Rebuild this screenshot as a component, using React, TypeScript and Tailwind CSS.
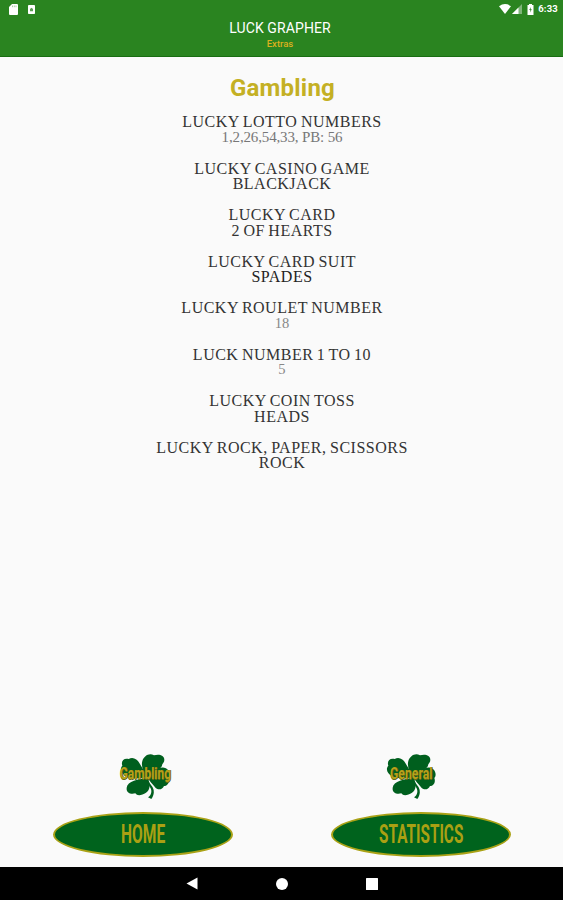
const readings = [
  { title: 'LUCKY LOTTO NUMBERS', value: '1,2,26,54,33, PB: 56', tone: 'text-[15px] tracking-[-0.15px] [word-spacing:0px] text-[#777]' },
  { title: 'LUCKY CASINO GAME', value: 'BLACKJACK', tone: 'text-[#333]' },
  { title: 'LUCKY CARD', value: '2 OF HEARTS', tone: 'text-[#333]' },
  { title: 'LUCKY CARD SUIT', value: 'SPADES', tone: 'text-[#222]' },
  { title: 'LUCKY ROULET NUMBER', value: '18', tone: 'text-[14.5px] tracking-[0px] text-[#888]' },
  { title: 'LUCK NUMBER 1 TO 10', value: '5', tone: 'text-[14.5px] text-[#888]' },
  { title: 'LUCKY COIN TOSS', value: 'HEADS', tone: 'text-[#333]' },
  { title: 'LUCKY ROCK, PAPER, SCISSORS', value: 'ROCK', tone: 'text-[#333]' },
];

function StatusBar() {
  return (
    <div className="flex h-[18px] items-center justify-between pl-[9px] pr-[5px] text-white">
      <div className="flex items-center gap-[10px]">
        <svg width="9" height="11" viewBox="0 0 9 11">
          <path d="M3 0H8Q9 0 9 1V10Q9 11 8 11H1Q0 11 0 10V3Z" fill="currentColor" />
          <path d="M3.5 1.5V3.2M5.3 1.5V3.2M7 1.5V3.2" stroke="#2a8420" strokeWidth=".4" />
        </svg>
        <svg width="7" height="9" viewBox="0 0 7 9">
          <rect width="7" height="9" rx=".8" fill="currentColor" />
          <path d="M2 6.2V4L3.5 2.8L5 4V6.2Z" fill="#5a9f52" />
        </svg>
      </div>
      <div className="flex items-center">
        <svg width="12" height="10" viewBox="0 0 12 10">
          <path d="M0 2.2Q6-2 12 2.2L6 10Z" fill="currentColor" />
        </svg>
        <svg className="ml-px" width="10" height="10" viewBox="0 0 10 10">
          <path d="M10 0V10H0Z" fill="#fff" opacity=".4" />
          <path d="M6.5 3.5V10H0Z" fill="#fff" />
        </svg>
        <svg className="ml-[5px]" width="7" height="11" viewBox="0 0 7 11">
          <path d="M2 0H5V1H6.5V11H.5V1H2Z" fill="currentColor" />
          <path d="M4 3L2.2 6H3.4L3 8.5L4.8 5.3H3.6Z" fill="#2a8420" />
        </svg>
        <span className="ml-[4px] text-[9.5px] leading-none font-bold tracking-[0.2px]">6:33</span>
      </div>
    </div>
  );
}

function Clover({ label, textClass }: { label: string; textClass: string }) {
  return (
    <button className="relative flex h-[46px] w-[50px] items-center justify-center pb-[5px]">
      <svg className="absolute inset-0" width="50" height="46" viewBox="0 0 150 138">
        <g fill="#005f1e">
          <path d="M82 74C72 58 62 42 67 24C72 8 88-2 102 7C116 2 133 6 133 20C133 27 129 30 127 34C126 50 98 58 82 74Z" />
          <path d="M82 74C60 74 32 80 18 70C4 62-2 48 7 38C2 24 12 14 26 18C38 10 52 18 58 30C66 44 76 58 82 74Z" />
          <path d="M82 74C92 90 92 110 78 119C66 127 52 130 46 121C32 125 18 119 20 104C22 84 56 78 82 74Z" />
          <path d="M82 74C98 60 114 40 132 44C146 46 154 64 145 75C150 88 142 99 132 99C126 112 112 112 104 101C96 92 90 84 82 74Z" />
          <path d="M82 76C88 94 98 98 101 111C103 122 99 132 94 138L84 133C94 126 97 114 91 104C87 97 80 88 80 78Z" />
        </g>
      </svg>
      <span className={`relative block text-[17px] leading-none font-bold whitespace-nowrap text-[#b6a21c] [text-shadow:1px_0_0_#454d08,0_1px_0_#686a16] ${textClass}`}>
        {label}
      </span>
    </button>
  );
}

function OvalButton({ label, textClass }: { label: string; textClass: string }) {
  return (
    <button className="flex h-[45px] w-[180px] items-center justify-center rounded-[50%] border-2 border-[#aaa216] bg-[#00631d]">
      <span className={`block pt-px text-[25.5px] leading-none font-bold text-[#aaa013] ${textClass}`}>{label}</span>
    </button>
  );
}

export default function App() {
  return (
    <div className="flex h-[900px] w-[563px] flex-col overflow-hidden bg-[#fafafa] font-[Roboto,sans-serif]">
      <header className="h-[57px] border-b border-[#196d12] bg-[#2a8420] text-center">
        <StatusBar />
        <h1 className="mt-[2px] pr-[3px] text-[14px] leading-[16px] tracking-[0.1px] text-white">LUCK GRAPHER</h1>
        <p className="pr-[3px] text-[9.5px] leading-[15px] font-medium text-[#dcb01e]">Extras</p>
      </header>
      <main className="flex flex-1 flex-col items-center">
        <h2 className="mt-[15px] pl-[2px] text-[24px] leading-[32px] font-bold tracking-[0.2px] text-[#c4b024]">Gambling</h2>
        <dl className="mt-[10px] flex flex-col gap-[15.5px] pl-px text-center font-['Liberation_Serif',serif] text-[16px] leading-[15.5px] tracking-[0.5px] whitespace-nowrap [word-spacing:-1px]">
          {readings.map((r) => (
            <div key={r.title}>
              <dt className="text-[#333]">{r.title}</dt>
              <dd className={r.tone}>{r.value}</dd>
            </div>
          ))}
        </dl>
      </main>
      <footer>
        <div className="flex justify-between pr-[127px] pl-[120px]">
          <Clover label="Gambling" textClass="scale-x-[.7] pl-[2px]" />
          <Clover label="General" textClass="scale-x-[.72] pl-[2px]" />
        </div>
        <div className="mt-[13px] mb-[10px] flex justify-between pr-[52px] pl-[53px]">
          <OvalButton label="HOME" textClass="scale-x-[.61]" />
          <OvalButton label="STATISTICS" textClass="scale-x-[.6]" />
        </div>
        <nav className="flex h-[33px] items-center justify-center gap-[78px] bg-black text-white">
          <svg width="12" height="13" viewBox="0 0 12 13"><path d="M11.5.5V12.5L.5 6.5Z" fill="currentColor" /></svg>
          <svg width="12" height="12" viewBox="0 0 12 12"><circle cx="6" cy="6" r="6" fill="currentColor" /></svg>
          <svg width="12" height="12" viewBox="0 0 12 12"><rect width="12" height="12" rx=".5" fill="currentColor" /></svg>
        </nav>
      </footer>
    </div>
  );
}
